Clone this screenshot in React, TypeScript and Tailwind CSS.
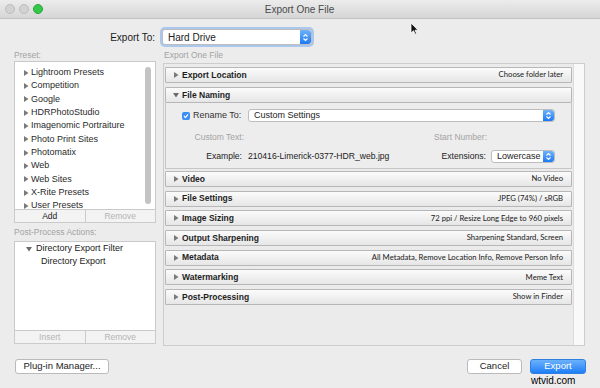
import { ReactNode } from "react";

const presets = [
  "Lightroom Presets",
  "Competition",
  "Google",
  "HDRPhotoStudio",
  "Imagenomic Portraiture",
  "Photo Print Sites",
  "Photomatix",
  "Web",
  "Web Sites",
  "X-Rite Presets",
  "User Presets",
];

const sections = [
  { title: "Video", summary: "No Video" },
  { title: "File Settings", summary: "JPEG (74%) / sRGB" },
  { title: "Image Sizing", summary: "72 ppi / Resize Long Edge to 960 pixels" },
  { title: "Output Sharpening", summary: "Sharpening Standard, Screen" },
  { title: "Metadata", summary: "All Metadata, Remove Location Info, Remove Person Info" },
  { title: "Watermarking", summary: "Meme Text" },
  { title: "Post-Processing", summary: "Show in Finder" },
];

function Stepper() {
  return (
    <div className="w-[11px] h-full rounded-r-[3px] bg-linear-to-b from-[#6db2fb] to-[#1878f3] flex items-center justify-center">
      <svg width="7" height="9" viewBox="0 0 7 9" fill="none" stroke="white" strokeWidth="1.1">
        <path d="M1.5 3.5 L3.5 1.5 L5.5 3.5" />
        <path d="M1.5 5.5 L3.5 7.5 L5.5 5.5" />
      </svg>
    </div>
  );
}

function Select({ label, className, textClass }: { label: string; className: string; textClass?: string }) {
  return (
    <div className={"flex items-stretch bg-white border border-[#bdbdbd] rounded-[3px] " + className}>
      <div className={"flex-1 flex items-center text-[#222] " + (textClass ?? "pl-[5px] text-[9px]")}>{label}</div>
      <Stepper />
    </div>
  );
}

function Tri({ open = false }: { open?: boolean }) {
  return (
    <svg width="6" height="6" viewBox="0 0 6 6" className="shrink-0">
      {open ? <path d="M0 1 L6 1 L3 5.5 Z" fill="#6b6b6b" /> : <path d="M1 0 L5.5 3 L1 6 Z" fill="#7a7a7a" />}
    </svg>
  );
}

function SectionHeader({ title, summary, open = false }: { title: string; summary?: string; open?: boolean }) {
  return (
    <div className="h-[16px] shrink-0 flex items-center border border-[#b7b7b7] rounded-[1px] bg-linear-to-b from-[#fbfbfb] to-[#e6e6e6] pl-[7px] pr-[8px]">
      <Tri open={open} />
      <span className="ml-[3px] text-[8.5px] font-bold text-[#1e1e1e]">{title}</span>
      <span className="ml-auto text-[7.7px] text-[#1a1a1a] font-['Lato',sans-serif]">{summary}</span>
    </div>
  );
}

function ListButtons({ left, right, leftActive = false }: { left: string; right: string; leftActive?: boolean }) {
  return (
    <div className="flex h-[13px] border border-t-0 border-[#cbcbcb] bg-[#f3f3f3] text-[8.5px]">
      <div className={"flex-1 flex items-center justify-center border-r border-[#cbcbcb] " + (leftActive ? "text-[#222]" : "text-[#b3b3b3]")}>{left}</div>
      <div className="flex-1 flex items-center justify-center text-[#b3b3b3]">{right}</div>
    </div>
  );
}

function Button({ children, className }: { children: ReactNode; className: string }) {
  return (
    <div className={"h-[15px] flex items-center justify-center rounded-[3px] text-[9.5px] " + className}>{children}</div>
  );
}

export default function App() {
  return (
    <div className="relative w-[600px] h-[388px] bg-[#ececec] overflow-hidden font-['Liberation_Sans',Arial,sans-serif] flex flex-col">
      {/* Title bar */}
      <div className="relative h-[19px] shrink-0 bg-linear-to-b from-[#ececec] to-[#d6d6d6] border-b border-[#c2c2c2] flex items-center">
        <div className="flex gap-[4px] pl-[5px]">
          <div className="w-[10px] h-[10px] rounded-full bg-[#d2d2d2] border border-[#bdbdbd]" />
          <div className="w-[10px] h-[10px] rounded-full bg-[#d2d2d2] border border-[#bdbdbd]" />
          <div className="w-[10px] h-[10px] rounded-full bg-[#34c84a] border border-[#2aa53d]" />
        </div>
        <div className="flex-1 text-center text-[10px] text-[#4a4a4a] pr-[44px]">Export One File</div>
      </div>

      {/* Export To row */}
      <div className="flex items-center mt-[10px] h-[16px] shrink-0">
        <div className="w-[155px] text-right text-[10px] text-[#1a1a1a]">Export To:</div>
        <Select
          label="Hard Drive"
          className="ml-[7px] w-[150px] h-[16px] shadow-[0_0_0_2px_rgba(120,170,240,0.55)]"
          textClass="pl-[5px] text-[10px]"
        />
      </div>

      {/* Main area */}
      <div className="flex mt-[4px] pl-[14px] gap-[7px]">
        {/* Left column */}
        <div className="w-[142px] flex flex-col">
          <div className="h-[12px] text-[8.5px] text-[#a3a3a3] flex items-center">Preset:</div>
          <div className="h-[149px] bg-white border border-[#c9c9c9] flex">
            <div className="flex-1 pt-[4px] pl-[8px] overflow-hidden">
              {presets.map((p) => (
                <div key={p} className="h-[13.35px] flex items-center gap-[2px] text-[9px] text-[#2a2a2a]">
                  <Tri />
                  <span>{p}</span>
                </div>
              ))}
            </div>
            <div className="w-[10px] py-[5px] pr-[3px]">
              <div className="w-[6px] h-full rounded-full bg-[#c4c4c4]" />
            </div>
          </div>
          <ListButtons left="Add" right="Remove" leftActive />

          <div className="mt-[3px] h-[12px] text-[8.5px] text-[#a3a3a3] flex items-center">Post-Process Actions:</div>
          <div className="mt-[3px] h-[90px] bg-white border border-[#c9c9c9] pt-[1px]">
            <div className="h-[12px] flex items-center pl-[11px] gap-[4px] text-[9px] text-[#222]">
              <Tri open />
              <span>Directory Export Filter</span>
            </div>
            <div className="h-[14px] flex items-center pl-[26px] text-[9px] text-[#222]">Directory Export</div>
          </div>
          <ListButtons left="Insert" right="Remove" />
        </div>

        {/* Right column */}
        <div className="w-[422px] flex flex-col">
          <div className="h-[12px] text-[8.5px] text-[#a3a3a3] flex items-center pl-[1px]">Export One File</div>
          <div className="mt-[2px] h-[283px] border border-[#cdcdcd] bg-[#ebebeb] flex">
            <div className="flex-1 pt-[3px] px-[1px] flex flex-col">
              <SectionHeader title="Export Location" summary="Choose folder later" />
              <div className="mt-[4px]">
                <SectionHeader title="File Naming" open />
                <div className="border border-t-0 border-[#c6c6c6] bg-[#ededed] pt-[6px] pb-[5px]">
                  <div className="flex items-center h-[13px]">
                    <div className="w-[82px] flex items-center pl-[16px]">
                      <div className="w-[8px] h-[8px] rounded-[2px] bg-[#3a8ef5] flex items-center justify-center">
                        <svg width="6" height="6" viewBox="0 0 6 6" fill="none" stroke="white" strokeWidth="1.2">
                          <path d="M1 3 L2.5 4.5 L5 1.3" />
                        </svg>
                      </div>
                      <span className="ml-[3px] text-[9px] text-[#333]">Rename To:</span>
                    </div>
                    <Select label="Custom Settings" className="flex-1 h-[13px] mr-[16px]" />
                  </div>
                  <div className="flex items-center h-[12px] mt-[9px] text-[8.5px] text-[#a3a3a3]">
                    <div className="w-[78px] text-right">Custom Text:</div>
                    <div className="flex-1" />
                    <div>Start Number:</div>
                    <div className="w-[84px]" />
                  </div>
                  <div className="flex items-center h-[13px] mt-[7px] text-[8.6px] text-[#222]">
                    <div className="w-[76px] text-right">Example:</div>
                    <div className="ml-[6px]">210416-Limerick-0377-HDR_web.jpg</div>
                    <div className="flex-1" />
                    <div>Extensions:</div>
                    <Select label="Lowercase" className="ml-[5px] w-[64px] h-[13px] mr-[16px]" />
                  </div>
                </div>
              </div>
              <div className="mt-[2px] flex flex-col gap-[3.67px]">
                {sections.map((s) => (
                  <SectionHeader key={s.title} title={s.title} summary={s.summary} />
                ))}
              </div>
            </div>
            <div className="w-[11px] border-l border-[#dcdcdc] bg-[#f9f9f9]" />
          </div>
        </div>
      </div>

      {/* Bottom buttons */}
      <div className="flex items-center mt-[13px] pl-[15px] pr-[14px]">
        <Button className="w-[94px] bg-white border border-[#bababa] text-[#222]">Plug-in Manager...</Button>
        <div className="flex-1" />
        <Button className="w-[55px] bg-white border border-[#bababa] text-[#222]">Cancel</Button>
        <Button className="ml-[8px] w-[56px] bg-linear-to-b from-[#6ab1fb] to-[#1a7ef6] border border-[#2f7fe0] text-white">Export</Button>
      </div>

      {/* Cursor */}
      <svg className="absolute left-[410px] top-[22px]" width="9" height="13" viewBox="0 0 9 13">
        <path d="M1 1 L1 11 L3.5 8.7 L5.2 12.2 L6.6 11.5 L5 8.2 L8 8.2 Z" fill="#111" stroke="white" strokeWidth="0.8" />
      </svg>

      {/* Watermark */}
      <div className="absolute left-[531px] top-[376px] text-[10px] text-black leading-none">wtvid.com</div>
    </div>
  );
}
